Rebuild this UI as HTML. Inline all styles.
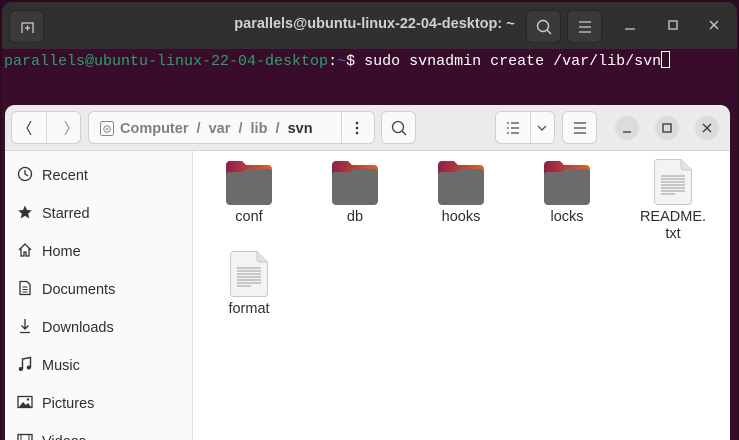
<!DOCTYPE html>
<html style="overflow:hidden;height:440px"><head><meta charset="utf-8"><style>
*{box-sizing:border-box;margin:0;padding:0}
body{width:739px;height:440px;overflow:hidden;background:#2c0b22;font-family:"Liberation Sans",sans-serif;position:relative}
.term{position:absolute;left:2px;top:2px;width:735px;height:438px;background:#380c2a;border-radius:10px 10px 0 0;overflow:hidden}
.tbar{height:47px;background:#303030;position:relative;color:#d6d6d6}
.tbtn{position:absolute;top:8px;width:35px;height:33px;border-radius:6px;background:#3a3a3a;border:1px solid #262626}
.ttitle{position:absolute;left:0;right:0;top:14px;text-align:center;font-weight:bold;font-size:14.5px;color:#d0d0d0;padding-left:10px}
.tline{position:absolute;top:49px;left:2px;font-family:"Liberation Mono",monospace;font-size:15px;color:#fff;white-space:pre}
.g{color:#26a269}
.cur{display:inline-block;width:9px;height:17px;border:1px solid #fff;vertical-align:-3px}
.naut{position:absolute;left:5px;top:105px;width:725px;height:335px;background:#fff;border-radius:10px 10px 0 0;overflow:hidden}
.nbar{height:46px;background:#ebebeb;border-bottom:1px solid #d6d6d6;position:relative}
.b{position:absolute;top:6px;height:33px;background:#fafafa;border:1px solid #d0d0d0;border-radius:6px}
.side{position:absolute;left:0;top:46px;width:188px;bottom:0;background:#fafafa;border-right:1px solid #e0e0e0}
.si{position:absolute;left:37px;font-size:14.5px;color:#2e2e2e;margin-top:2px}
.ic{position:absolute;left:12px;width:16px;height:16px}
.it{position:absolute;width:100px;text-align:center;font-size:14.5px;color:#2e2e2e;line-height:17px;margin-top:2px}
.fold{position:absolute;width:46px;height:44px}
.circ{position:absolute;top:11px;width:24px;height:24px;border-radius:50%;background:#dcdcdc}
</style></head><body>
<div class="term">
<div class="tbar">
<div class="tbtn" style="left:7px"><svg width="35" height="33"><path d="M12 22V12h11v10" fill="none" stroke="#ccc" stroke-width="1.3"/><path d="M17.5 14.5v5M15 17h5" stroke="#ccc" stroke-width="1.3"/></svg></div>
<div class="ttitle">parallels@ubuntu-linux-22-04-desktop: ~</div>
<div class="tbtn" style="left:524px"><svg width="35" height="33"><circle cx="16" cy="15" r="5.5" fill="none" stroke="#ccc" stroke-width="1.4"/><path d="M20 19l4 4" stroke="#ccc" stroke-width="1.4"/></svg></div>
<div class="tbtn" style="left:565px"><svg width="35" height="33"><path d="M11 11h12M11 16h12M11 21h12" stroke="#ccc" stroke-width="1.3"/></svg></div>
<svg style="position:absolute;left:620px;top:14px" width="110" height="20"><path d="M3 13h10" stroke="#ccc" stroke-width="1.3"/><rect x="47" y="5" width="8" height="8" fill="none" stroke="#ccc" stroke-width="1.3"/><path d="M88 5l8 8M96 5l-8 8" stroke="#ccc" stroke-width="1.3"/></svg>
</div>
<div class="tline"><span class="g">parallels@ubuntu-linux-22-04-desktop</span>:<span style="color:#3d6fc4">~</span>$ sudo svnadmin create /var/lib/svn<span class="cur"></span></div>
</div>
<div class="naut">
<div class="nbar">
<div class="b" style="left:6px;width:70px"><div style="position:absolute;left:34px;top:0;bottom:0;border-left:1px solid #d6d6d6"></div><svg width="70" height="33"><path d="M19 9l-4 7 4 7" fill="none" stroke="#444" stroke-width="1.2"/><path d="M53 9l4 7-4 7" fill="none" stroke="#999" stroke-width="1.2"/></svg></div>
<div class="b" style="left:83px;width:287px;font-size:14.5px;font-weight:bold;color:#808080;line-height:31px;white-space:pre"><svg style="position:absolute;left:11px;top:9px" width="14" height="15"><rect x="0.5" y="0.5" width="13" height="14" rx="2" fill="none" stroke="#888"/><circle cx="7" cy="8" r="3.2" fill="none" stroke="#888"/><circle cx="7" cy="8" r="1" fill="#888"/></svg><span style="position:absolute;left:31px;top:2px">Computer  /  var  /  lib  /  <span style="color:#333">svn</span></span><div style="position:absolute;left:252px;top:0;bottom:0;border-left:1px solid #d6d6d6"></div><svg style="position:absolute;left:264px;top:9px" width="8" height="14"><circle cx="4" cy="2" r="1.3" fill="#333"/><circle cx="4" cy="7" r="1.3" fill="#333"/><circle cx="4" cy="12" r="1.3" fill="#333"/></svg></div>
<div class="b" style="left:376px;width:35px"><svg width="35" height="33"><circle cx="16" cy="15" r="5.5" fill="none" stroke="#444" stroke-width="1.3"/><path d="M20 19l4 4" stroke="#444" stroke-width="1.3"/></svg></div>
<div class="b" style="left:490px;width:60px"><div style="position:absolute;left:34px;top:0;bottom:0;border-left:1px solid #d6d6d6"></div><svg width="60" height="33"><path d="M11 11h2M11 16h2M11 21h2M15 11h8M15 16h8M15 21h8" stroke="#444" stroke-width="1.3"/><path d="M42 14l4 4 4-4" fill="none" stroke="#444" stroke-width="1.2"/></svg></div>
<div class="b" style="left:557px;width:35px"><svg width="35" height="33"><path d="M11 11h12M11 16h12M11 21h12" stroke="#444" stroke-width="1.3"/></svg></div>
<div class="circ" style="left:610px"><svg width="24" height="24"><path d="M8 16h8" stroke="#333" stroke-width="1.3"/></svg></div>
<div class="circ" style="left:650px"><svg width="24" height="24"><rect x="8" y="8" width="8" height="8" fill="none" stroke="#333" stroke-width="1.3"/></svg></div>
<div class="circ" style="left:690px"><svg width="24" height="24"><path d="M8 8l8 8M16 8l-8 8" stroke="#333" stroke-width="1.3"/></svg></div>
</div>
<div class="side">
<svg class="ic" style="top:15px" viewBox="0 0 16 16"><circle cx="8" cy="8" r="6.5" fill="none" stroke="#333" stroke-width="1.3"/><path d="M8 4v4l3 2" fill="none" stroke="#333" stroke-width="1.3"/></svg><div class="si" style="top:15px">Recent</div>
<svg class="ic" style="top:53px" viewBox="0 0 16 16"><path d="M8 1.5l2 4.5 4.8.4-3.6 3.2 1.1 4.8L8 11.9 3.7 14.4l1.1-4.8L1.2 6.4 6 6z" fill="#333"/></svg><div class="si" style="top:53px">Starred</div>
<svg class="ic" style="top:91px" viewBox="0 0 16 16"><path d="M2 8L8 2l6 6M4 6.5V14h3v-4h2v4h3V6.5" fill="none" stroke="#333" stroke-width="1.3"/></svg><div class="si" style="top:91px">Home</div>
<svg class="ic" style="top:129px" viewBox="0 0 16 16"><path d="M3 1.5h7l3 3V14.5H3z" fill="none" stroke="#333" stroke-width="1.3"/><path d="M5.5 7h5M5.5 9.5h5M5.5 12h5" stroke="#333"/></svg><div class="si" style="top:129px">Documents</div>
<svg class="ic" style="top:167px" viewBox="0 0 16 16"><path d="M8 1v10M4.5 7.5L8 11l3.5-3.5M3 14.5h10" fill="none" stroke="#333" stroke-width="1.3"/></svg><div class="si" style="top:167px">Downloads</div>
<svg class="ic" style="top:205px" viewBox="0 0 16 16"><path d="M5.5 13V3l8-1.5v10" fill="none" stroke="#333" stroke-width="1.4"/><circle cx="3.8" cy="13" r="2" fill="#333"/><circle cx="11.8" cy="11.5" r="2" fill="#333"/></svg><div class="si" style="top:205px">Music</div>
<svg class="ic" style="top:243px" viewBox="0 0 16 16"><rect x="1" y="2.5" width="14" height="11" fill="none" stroke="#333" stroke-width="1.3"/><path d="M2 13l4-5 3 3 2-2 3 4z" fill="#333"/><circle cx="11" cy="5.5" r="1.2" fill="#333"/></svg><div class="si" style="top:243px">Pictures</div>
<svg class="ic" style="top:281px" viewBox="0 0 16 16"><rect x="1" y="2.5" width="14" height="11" fill="none" stroke="#333" stroke-width="1.3"/><path d="M4 2.5v11M12 2.5v11" stroke="#333"/></svg><div class="si" style="top:281px">Videos</div>
</div>
<svg width="0" height="0" style="position:absolute"><defs>
<linearGradient id="tab" x1="0" x2="1"><stop offset="0" stop-color="#8d1f4a"/><stop offset="1" stop-color="#e0632a"/></linearGradient>
<symbol id="fd" viewBox="0 0 46 44"><path d="M0 4a4 4 0 0 1 4-4h12l4 4h22a4 4 0 0 1 4 4v10H0z" fill="url(#tab)"/><path d="M0 14a3 3 0 0 1 3-3h14l4-3h22a3 3 0 0 1 3 3v29a4 4 0 0 1-4 4H4a4 4 0 0 1-4-4z" fill="#6b6b6b"/></symbol>
<symbol id="doc" viewBox="0 0 38 46"><path d="M3 .5h24l10.5 10.5v31.5a3 3 0 0 1-3 3H3a3 3 0 0 1-2.5-3V3.5A3 3 0 0 1 3 .5z" fill="#f3f3f3" stroke="#c9c9c9"/><path d="M27 .5v8a2.5 2.5 0 0 0 2.5 2.5h8" fill="#e2e2e2" stroke="#c9c9c9"/><path d="M7 17h24M7 20h24M7 23h24M7 26h24M7 29h24M7 32h24M7 35h14" stroke="#9a9a9a" stroke-width=".9"/></symbol>
</defs></svg>
<svg class="fold" style="left:221px;top:56px"><use href="#fd"/></svg><div class="it" style="left:194px;top:102px">conf</div>
<svg class="fold" style="left:327px;top:56px"><use href="#fd"/></svg><div class="it" style="left:300px;top:102px">db</div>
<svg class="fold" style="left:433px;top:56px"><use href="#fd"/></svg><div class="it" style="left:406px;top:102px">hooks</div>
<svg class="fold" style="left:539px;top:56px"><use href="#fd"/></svg><div class="it" style="left:512px;top:102px">locks</div>
<svg style="position:absolute;left:649px;top:54px" width="38" height="46"><use href="#doc"/></svg><div class="it" style="left:618px;top:102px">README.<br>txt</div>
<svg style="position:absolute;left:225px;top:146px" width="38" height="46"><use href="#doc"/></svg><div class="it" style="left:194px;top:194px">format</div>
</div>
</body></html>
